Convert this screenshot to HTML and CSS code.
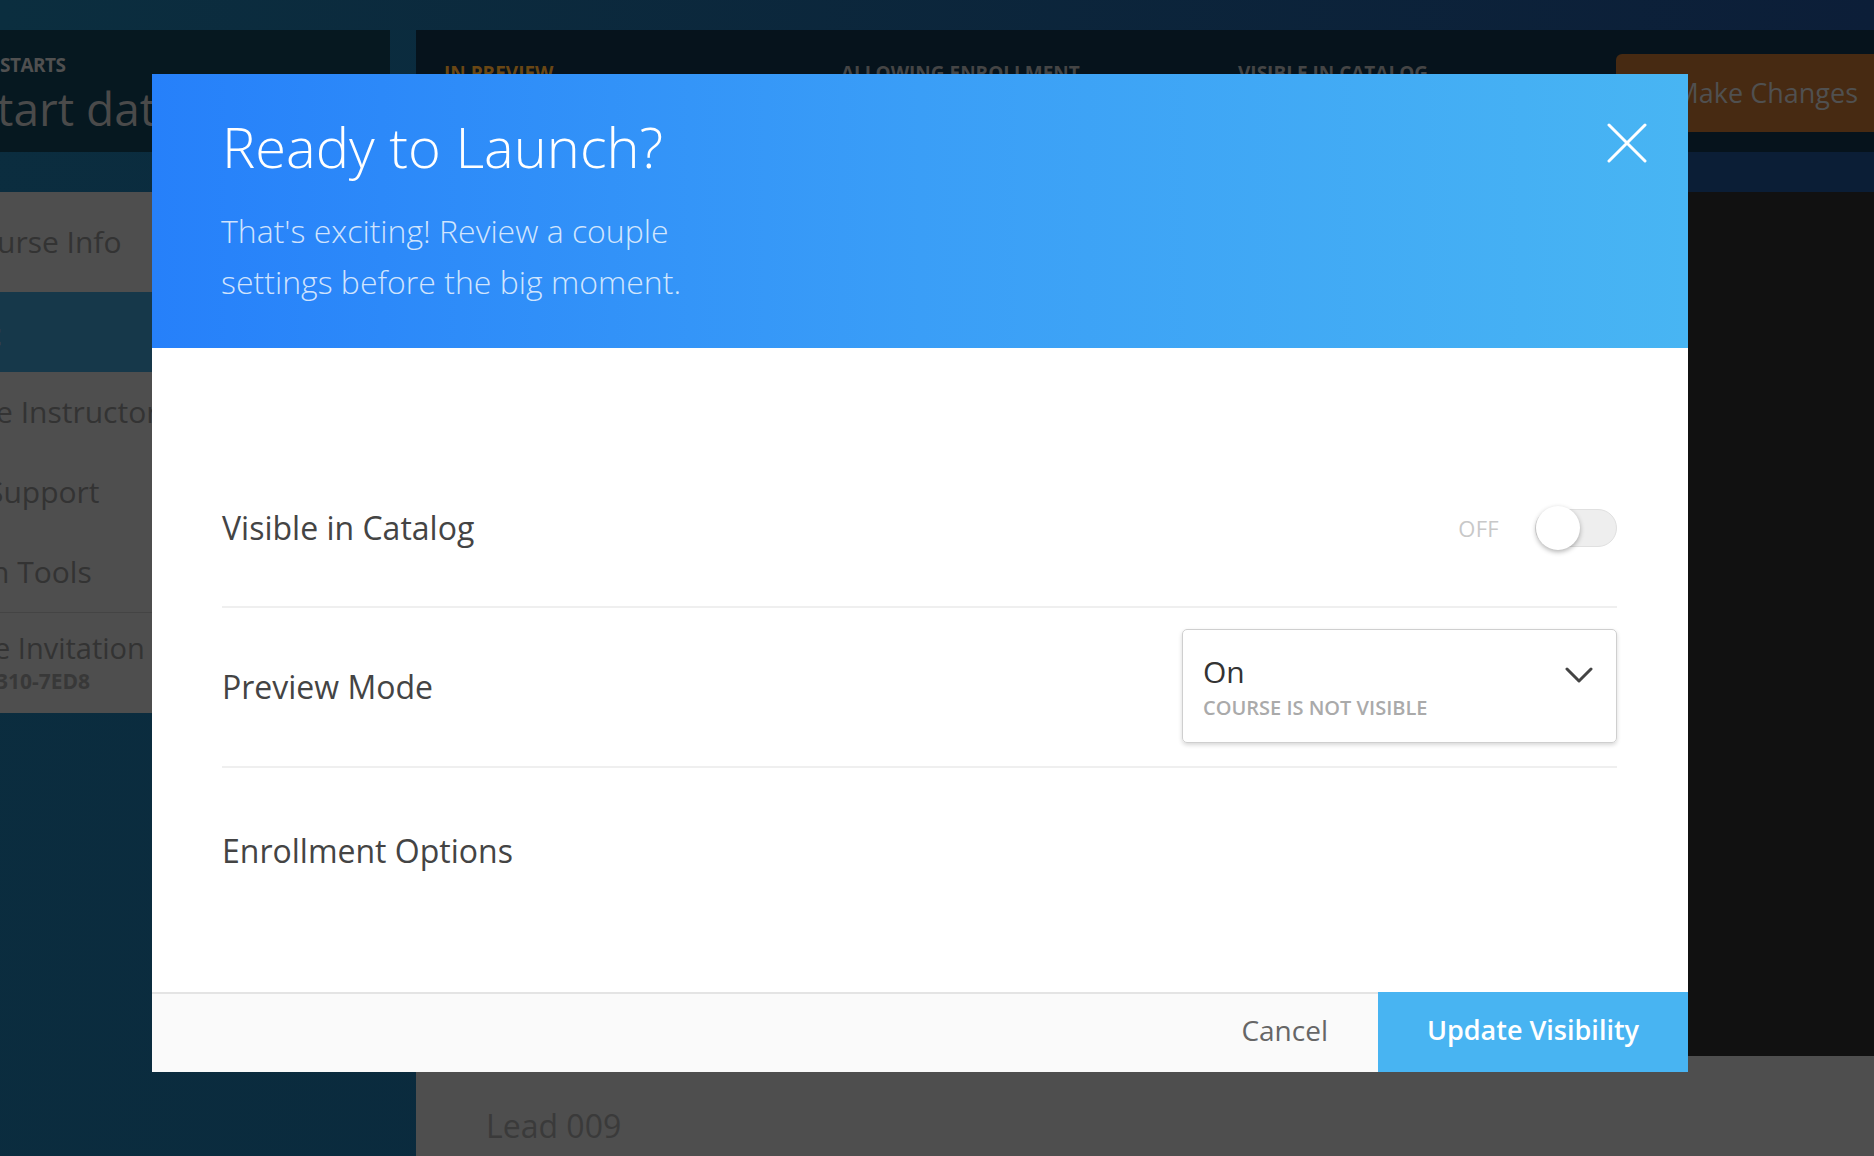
FILE: index.html
```html
<!DOCTYPE html>
<html lang="en">
<head>
<meta charset="utf-8">
<title>Ready to Launch?</title>
<link rel="stylesheet" href="styles.css">
</head>
<body>
<div class="app">
  <div class="topbar"></div>
  <div class="app-main">
    <aside class="sidebar">
      <div class="course-card">
        <div class="card-label">STARTS</div>
        <div class="card-value">tart date</div>
      </div>
      <div class="side-gap"></div>
      <div class="nav-item nav-info">urse Info</div>
      <div class="nav-active"><span class="frag">t</span></div>
      <div class="nav-list">
        <div class="nav-link link-instructor">e Instructor</div>
        <div class="nav-link link-support">Support</div>
        <div class="nav-link link-tools">n Tools</div>
        <div class="nav-invite">
          <div class="invite-title">e Invitation Code</div>
          <div class="invite-code">310-7ED8</div>
        </div>
      </div>
    </aside>
    <main class="content">
      <div class="content-head">
        <div class="status orange">IN PREVIEW</div>
        <div class="status">ALLOWING ENROLLMENT</div>
        <div class="status">VISIBLE IN CATALOG</div>
        <div class="make-changes">Make Changes</div>
      </div>
      <div class="content-strip"></div>
      <div class="content-body"></div>
      <div class="content-foot">Lead 009</div>
    </main>
  </div>
</div>

<div class="modal">
  <header class="modal-head">
    <h1 class="modal-title">Ready to Launch?</h1>
    <p class="modal-sub">That's exciting! Review a couple settings before the big moment.</p>
    <button class="close" aria-label="Close">
      <svg width="40" height="40" viewBox="0 0 40 40"><path d="M2 2 L38 38 M38 2 L2 38" stroke="#fff" stroke-width="3" stroke-linecap="round" fill="none"/></svg>
    </button>
  </header>
  <section class="modal-body">
    <div class="row row-first">
      <div class="row-label">Visible in Catalog</div>
      <div class="toggle-wrap">
        <span class="toggle-state">OFF</span>
        <span class="toggle"><span class="knob"></span></span>
      </div>
    </div>
    <div class="row">
      <div class="row-label">Preview Mode</div>
      <div class="select">
        <div class="select-text">
          <div class="select-value">On</div>
          <div class="select-hint">COURSE IS NOT VISIBLE</div>
        </div>
        <svg class="chevron" width="28" height="16" viewBox="0 0 28 16"><path d="M2 2 L14 14 L26 2" stroke="#444" stroke-width="3" fill="none" stroke-linecap="round" stroke-linejoin="round"/></svg>
      </div>
    </div>
    <div class="row row-last">
      <div class="row-label">Enrollment Options</div>
    </div>
  </section>
  <footer class="modal-foot">
    <div class="foot-left"><button class="cancel">Cancel</button></div>
    <button class="primary">Update Visibility</button>
  </footer>
</div>
</body>
</html>
```

FILE: styles.css
```css
* { box-sizing: border-box; }
html, body { margin: 0; padding: 0; }
body {
  width: 1874px;
  height: 1156px;
  overflow: hidden;
  position: relative;
  font-family: "Open Sans", "Noto Sans", sans-serif;
  background: linear-gradient(100deg, #0b2d3f 0%, #0a2a3d 40%, #0c1f39 100%);
}
.app { width: 100%; height: 100%; }
.topbar {
  height: 30px;
  background: linear-gradient(90deg, #0b2e3f, #0c1e38);
}
.app-main { display: flex; gap: 26px; height: 1126px; }
.sidebar { width: 390px; display: flex; flex-direction: column; overflow: hidden; }
.course-card {
  height: 122px;
  background: #061820;
  padding-top: 22px;
  white-space: nowrap;
}
.card-label { font-size: 19px; font-weight: 700; color: #505050; line-height: 26px; letter-spacing: -0.5px; }
.card-value { font-size: 46px; color: #4a4a4a; line-height: 56px; margin-left: -3px; margin-top: 2px; }
.side-gap { height: 40px; }
.nav-item { white-space: nowrap; }
.nav-info {
  height: 100px;
  background: #4e4e4e;
  color: #333;
  font-size: 30px;
  line-height: 100px;
  margin-left: -3px;
}
.nav-active { height: 80px; background: #16384a; position: relative; overflow: hidden; }
.frag { position: absolute; left: -12px; top: 22px; font-size: 30px; color: #555; font-weight: 700; }
.nav-list { height: 341px; background: #4e4e4e; color: #333; padding-top: 0; white-space: nowrap; }
.nav-link { font-size: 30px; line-height: 80px; height: 80px; margin-left: -14px; }
.link-instructor { margin-left: -4px; }
.link-support { margin-left: -13px; }
.link-tools { margin-left: -9px; }
.nav-invite { border-top: 1px solid #444; margin-top: 0; padding-top: 16px; }
.invite-title { font-size: 29px; line-height: 38px; margin-left: -6px; }
.invite-code { font-size: 21px; font-weight: 700; line-height: 28px; margin-left: -4px; color: #383838; }

.content { flex: 1; display: flex; flex-direction: column; }
.content-head {
  height: 122px;
  background: #06131c;
  display: flex;
  align-items: flex-start;
  padding-left: 28px;
  position: relative;
}
.status {
  font-size: 19px;
  font-weight: 700;
  color: #454545;
  margin-top: 30px;
  width: 397px;
  white-space: nowrap;
}
.status.orange { color: #6a4714; }
.make-changes {
  position: absolute;
  left: 1200px;
  top: 24px;
  width: 258px;
  height: 78px;
  background: #472a12;
  border-radius: 6px 0 0 6px;
  color: #505050;
  font-size: 27px;
  line-height: 78px;
  padding-right: 16px;
  text-align: right;
  white-space: nowrap;
}
.content-strip { height: 40px; background: #0b1e36; }
.content-body { height: 864px; background: #111; }
.content-foot {
  flex: 1;
  background: #4e4e4e;
  color: #3a3a3a;
  font-size: 32px;
  padding-left: 70px;
  padding-top: 48px;
}

/* Modal */
.modal {
  position: absolute;
  left: 152px;
  top: 74px;
  width: 1536px;
  background: #fff;
  display: flex;
  flex-direction: column;
}
.modal-head {
  position: relative;
  height: 274px;
  padding: 34px 70px 0 70px;
  background: linear-gradient(90deg, #2680fa 0%, #3a9ef7 50%, #48b5f3 100%);
}
.modal-title {
  margin: 0;
  font-size: 56px;
  line-height: 76px;
  font-weight: 300;
  color: #fff;
}
.modal-sub {
  margin: 21px 0 0 -1px;
  font-size: 32px;
  line-height: 51px;
  font-weight: 300;
  color: rgba(255, 255, 255, 0.78);
  max-width: 500px;
}
.close {
  position: absolute;
  right: 41px;
  top: 49px;
  width: 40px;
  height: 40px;
  padding: 0;
  border: 0;
  background: none;
  display: block;
}
.close svg { display: block; }

.modal-body {
  height: 644px;
  padding: 101px 71px 0 70px;
}
.row {
  display: flex;
  align-items: center;
  justify-content: space-between;
  height: 160px;
  border-bottom: 2px solid #efefef;
}
.row-first { height: 159px; }
.row-last { height: 166px; border-bottom: 0; }
.row-label { font-size: 32px; color: #444; line-height: 42px; }
.toggle-wrap { display: flex; align-items: center; }
.toggle-state { font-size: 22px; color: #c8c8c8; margin-right: 36px; letter-spacing: 0.3px; }
.toggle {
  position: relative;
  width: 82px;
  height: 38px;
  border-radius: 19px;
  background: #eeeeee;
  border: 1px solid #e0e0e0;
}
.knob {
  position: absolute;
  left: 0;
  top: -4px;
  width: 44px;
  height: 44px;
  border-radius: 50%;
  background: #fff;
  box-shadow: 0 2px 5px rgba(0, 0, 0, 0.3);
}
.select {
  width: 435px;
  height: 114px;
  border: 1px solid #cfcfcf;
  border-radius: 5px;
  box-shadow: 0 2px 4px rgba(0, 0, 0, 0.16);
  display: flex;
  justify-content: space-between;
  align-items: flex-start;
  padding: 24px 23px 0 20px;
  margin-top: -3px;
}
.select-value { font-size: 30px; line-height: 36px; color: #333; }
.select-hint { font-size: 20px; line-height: 26px; font-weight: 600; color: #aaa; margin-top: 5px; }
.chevron { margin-top: 13px; display: block; }

.modal-foot {
  display: flex;
  height: 80px;
  background: #fafafa;
}
.foot-left {
  flex: 1;
  display: flex;
  justify-content: flex-end;
  align-items: center;
  border-top: 2px solid #e4e4e4;
}
.cancel {
  border: 0;
  background: none;
  font-family: inherit;
  font-size: 28px;
  color: #666;
  padding: 0 50px 6px 0;
}
.primary {
  width: 310px;
  height: 80px;
  border: 0;
  background: #48b4f2;
  color: #fff;
  font-family: inherit;
  font-size: 27px;
  font-weight: 600;
  padding: 0 0 6px 0;
}
```
